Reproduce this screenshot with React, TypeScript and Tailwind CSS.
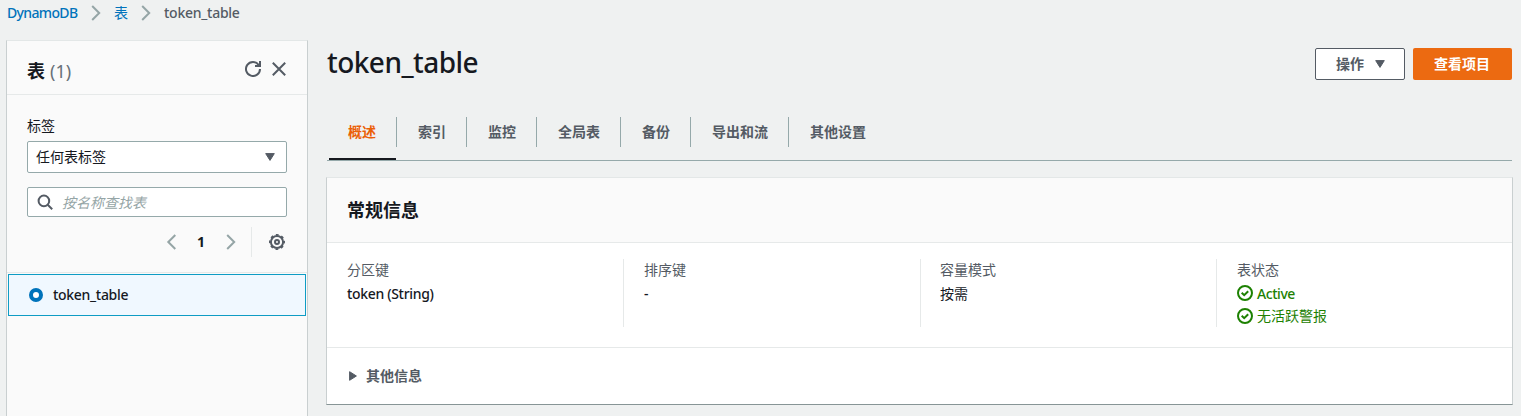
import React from 'react';

const tabs = [
  { label: '概述', cls: 'w-[67px] pl-[19px]' },
  { label: '索引', cls: 'w-[70px] pl-[21px]' },
  { label: '监控', cls: 'w-[70px] pl-[21px]' },
  { label: '全局表', cls: 'w-[84px] pl-[21px]' },
  { label: '备份', cls: 'w-[70px] pl-[21px]' },
  { label: '导出和流', cls: 'w-[98px] pl-[21px]' },
  { label: '其他设置', cls: 'w-[98px] pl-[21px]' },
];

function Chevron({ left = false, className = '' }: { left?: boolean; className?: string }) {
  return (
    <svg viewBox="0 0 10 16" className={`h-4 w-[10px] shrink-0 ${className}`} fill="none" stroke="#95a5a6" strokeWidth="2">
      <path d={left ? 'M9.3 1 2.3 8l7 7' : 'M1.2 1l7 7-7 7'} />
    </svg>
  );
}

function CaretDown({ className = '' }: { className?: string }) {
  return (
    <svg viewBox="0 0 10 8" className={`h-2 w-[10px] shrink-0 ${className}`} fill="#545b64" stroke="#545b64" strokeLinejoin="round">
      <path d="M.7.6h8.6L5 7.4z" />
    </svg>
  );
}

function StatusIcon({ className = '' }: { className?: string }) {
  return (
    <svg viewBox="0 0 16 16" className={`h-4 w-4 shrink-0 ${className}`} fill="none" stroke="#1d8102" strokeWidth="2">
      <circle cx="8" cy="8" r="7" />
      <path d="M4.7 7.7 7.2 10.2l4-4" />
    </svg>
  );
}

function Sidebar() {
  return (
    <aside className="h-[376px] w-[302px] shrink-0 border border-b-0 border-[#c9cfd0] border-t-[#e3e7e7] bg-[#fafafa]">
      <div className="flex h-[54px] items-center border-b border-[#e6e9e9] pr-5 pl-5 pt-1">
        <h2 className="mt-[3px] text-[18px] leading-[22px] font-bold whitespace-pre">
          表<span className="ml-[5px] font-normal text-[#687078]">(1)</span>
        </h2>
        <svg viewBox="0 0 16 16" className="mb-[1px] ml-auto h-4 w-4" fill="none" stroke="#545b64" strokeWidth="2">
          <path d="M15 8A7 7 0 1 1 13.6 3.8L14.6 5" />
          <path d="M15 0v5H10" />
        </svg>
        <svg viewBox="0 0 16 16" className="mb-[1px] ml-[10px] h-4 w-4" fill="none" stroke="#545b64" strokeWidth="2">
          <path d="M1.8 1.8l12.4 12.4M14.2 1.8 1.8 14.2" />
        </svg>
      </div>
      <div className="px-5 pt-5">
        <div className="h-[26px] text-[14px] leading-[22px]">标签</div>
        <div className="flex h-8 items-center rounded-[2px] border border-[#95a9aa] bg-white pr-[11px] pl-2 text-[14px] leading-[22px]">
          任何表标签
          <CaretDown className="ml-auto" />
        </div>
        <div className="mt-[14px] flex h-[30px] items-center rounded-[2px] border border-[#95a9aa] bg-white pl-[9px] text-[14px] leading-[22px]">
          <svg viewBox="0 0 16 16" className="h-4 w-4" fill="none" stroke="#545b64" strokeWidth="2">
            <circle cx="6.9" cy="6.9" r="5.3" />
            <path d="M10.7 10.7l4.5 4.5" />
          </svg>
          <span className="mt-px ml-[9px] text-[#95a5a6] italic">按名称查找表</span>
        </div>
        <div className="mt-[10px] flex h-[30px] items-center justify-end">
          <Chevron left />
          <span className="-mt-[2px] w-[50px] text-center text-[14px] font-bold">1</span>
          <Chevron />
          <div className="ml-[15px] h-[30px] border-l border-[#e6e9e9]" />
          <svg viewBox="0 0 16 16" className="mr-[2px] ml-[17px] h-4 w-4" fill="none" stroke="#545b64">
            <circle cx="8" cy="8" r="6.1" strokeWidth="2" />
            <circle cx="8" cy="8" r="7.2" strokeWidth="1.6" strokeDasharray="2.83 2.83" strokeDashoffset="1.41" />
            <circle cx="8" cy="8" r="2" strokeWidth="2" />
          </svg>
        </div>
      </div>
      <div className="mt-[15px] border-t border-[#e6e9e9] px-[1px] pt-[1px]">
        <div className="flex h-[42px] items-center border border-[#0e9cc4] bg-[#f0f8ff] pl-5">
          <span className="h-[14px] w-[14px] rounded-full border-[4px] border-[#0073bb] bg-white" />
          <span className="ml-[10px] text-[14px] leading-[22px] font-medium tracking-[-0.3px]">token_table</span>
        </div>
      </div>
    </aside>
  );
}

function Field({ label, className, children }: { label: string; className: string; children: React.ReactNode }) {
  return (
    <div className={`h-[68px] text-[14px] leading-[22px] ${className}`}>
      <div className="h-6 text-[#545b64]">{label}</div>
      {children}
    </div>
  );
}

export default function App() {
  return (
    <div className="flex h-[416px] w-[1521px] flex-col overflow-hidden bg-[#eff1f1] font-['Noto_Sans','Noto_Sans_CJK_SC',sans-serif] text-[#16191f]">
      <nav className="flex h-10 shrink-0 items-center pb-[14px] pl-[7px] text-[14px] leading-[22px]">
        <a className="w-[71px] font-medium tracking-[-0.65px] text-[#0073bb]">DynamoDB</a>
        <Chevron className="ml-[13px]" />
        <a className="ml-[13px] w-[14px] text-[#0073bb]">表</a>
        <Chevron className="ml-[13px]" />
        <span className="ml-[13px] font-medium tracking-[-0.26px] text-[#545b64]">token_table</span>
      </nav>
      <div className="flex pl-[6px]">
        <Sidebar />
        <main className="ml-[19px] w-[1185px]">
          <div className="flex h-[77px] items-start pt-2">
            <h1 className="mt-[-4px] text-[28px] leading-9 font-medium tracking-[-0.54px]">token_table</h1>
            <button className="ml-auto flex h-8 w-[90px] items-center rounded-[2px] border border-[#545b64] bg-white pl-5 text-[14px] leading-[22px] font-bold text-[#545b64]">
              操作
              <CaretDown className="ml-[11px]" />
            </button>
            <button className="ml-2 h-8 w-[99px] rounded-[2px] bg-[#ec6a11] pr-px text-[14px] leading-[22px] font-bold text-white">
              查看项目
            </button>
          </div>
          <div className="flex h-11 border-b border-[#95a9aa] pl-[2px]">
            {tabs.map((t, i) => (
              <div
                key={t.label}
                className={`h-[43px] text-[14px] font-bold ${t.cls} ${i === 0 ? 'border-b-2 border-[#16191f] text-[#eb5f07]' : 'text-[#545b64]'}`}
              >
                <div className={`h-[30px] leading-[30px] ${i === 0 ? '' : '-ml-[21px] border-l border-[#95a9aa] pl-[21px]'}`}>
                  {t.label}
                </div>
              </div>
            ))}
          </div>
          <section className="-mx-px mt-4 h-[228px] w-[1187px] border border-t-[#e3e7e7] border-r-[#c9cfd0] border-b-[#879596] border-l-[#c9cfd0] bg-white">
            <div className="flex h-[65px] items-center border-b border-[#e6e9e9] bg-[#fafafa] pl-5">
              <h2 className="-mt-px text-[18px] leading-[22px] font-bold">常规信息</h2>
            </div>
            <div className="flex h-[105px] border-b border-[#e6e9e9] pt-4">
              <Field label="分区键" className="w-[296px] pl-5">
                <div className="font-medium tracking-[-0.33px]">token (String)</div>
              </Field>
              <Field label="排序键" className="w-[297px] border-l border-[#e6e9e9] pl-5">
                <div className="font-medium">-</div>
              </Field>
              <Field label="容量模式" className="w-[296px] border-l border-[#e6e9e9] pl-[19px]">
                <div>按需</div>
              </Field>
              <Field label="表状态" className="border-l border-[#e6e9e9] pl-5">
                <div className="flex items-center gap-1 text-[#1d8102]">
                  <StatusIcon className="mb-[2px]" />
                  <span className="font-medium tracking-[-0.45px]">Active</span>
                </div>
                <div className="flex items-center gap-1 text-[#1d8102]">
                  <StatusIcon />
                  <span>无活跃警报</span>
                </div>
              </Field>
            </div>
            <div className="flex h-14 items-center pl-[22px] text-[14px] leading-[22px] font-bold text-[#545b64]">
              <svg viewBox="0 0 8 10" className="mr-[9px] h-[10px] w-2" fill="#545b64" stroke="#545b64" strokeLinejoin="round">
                <path d="M.6.7v8.6L7.4 5z" />
              </svg>
              其他信息
            </div>
          </section>
        </main>
      </div>
    </div>
  );
}
